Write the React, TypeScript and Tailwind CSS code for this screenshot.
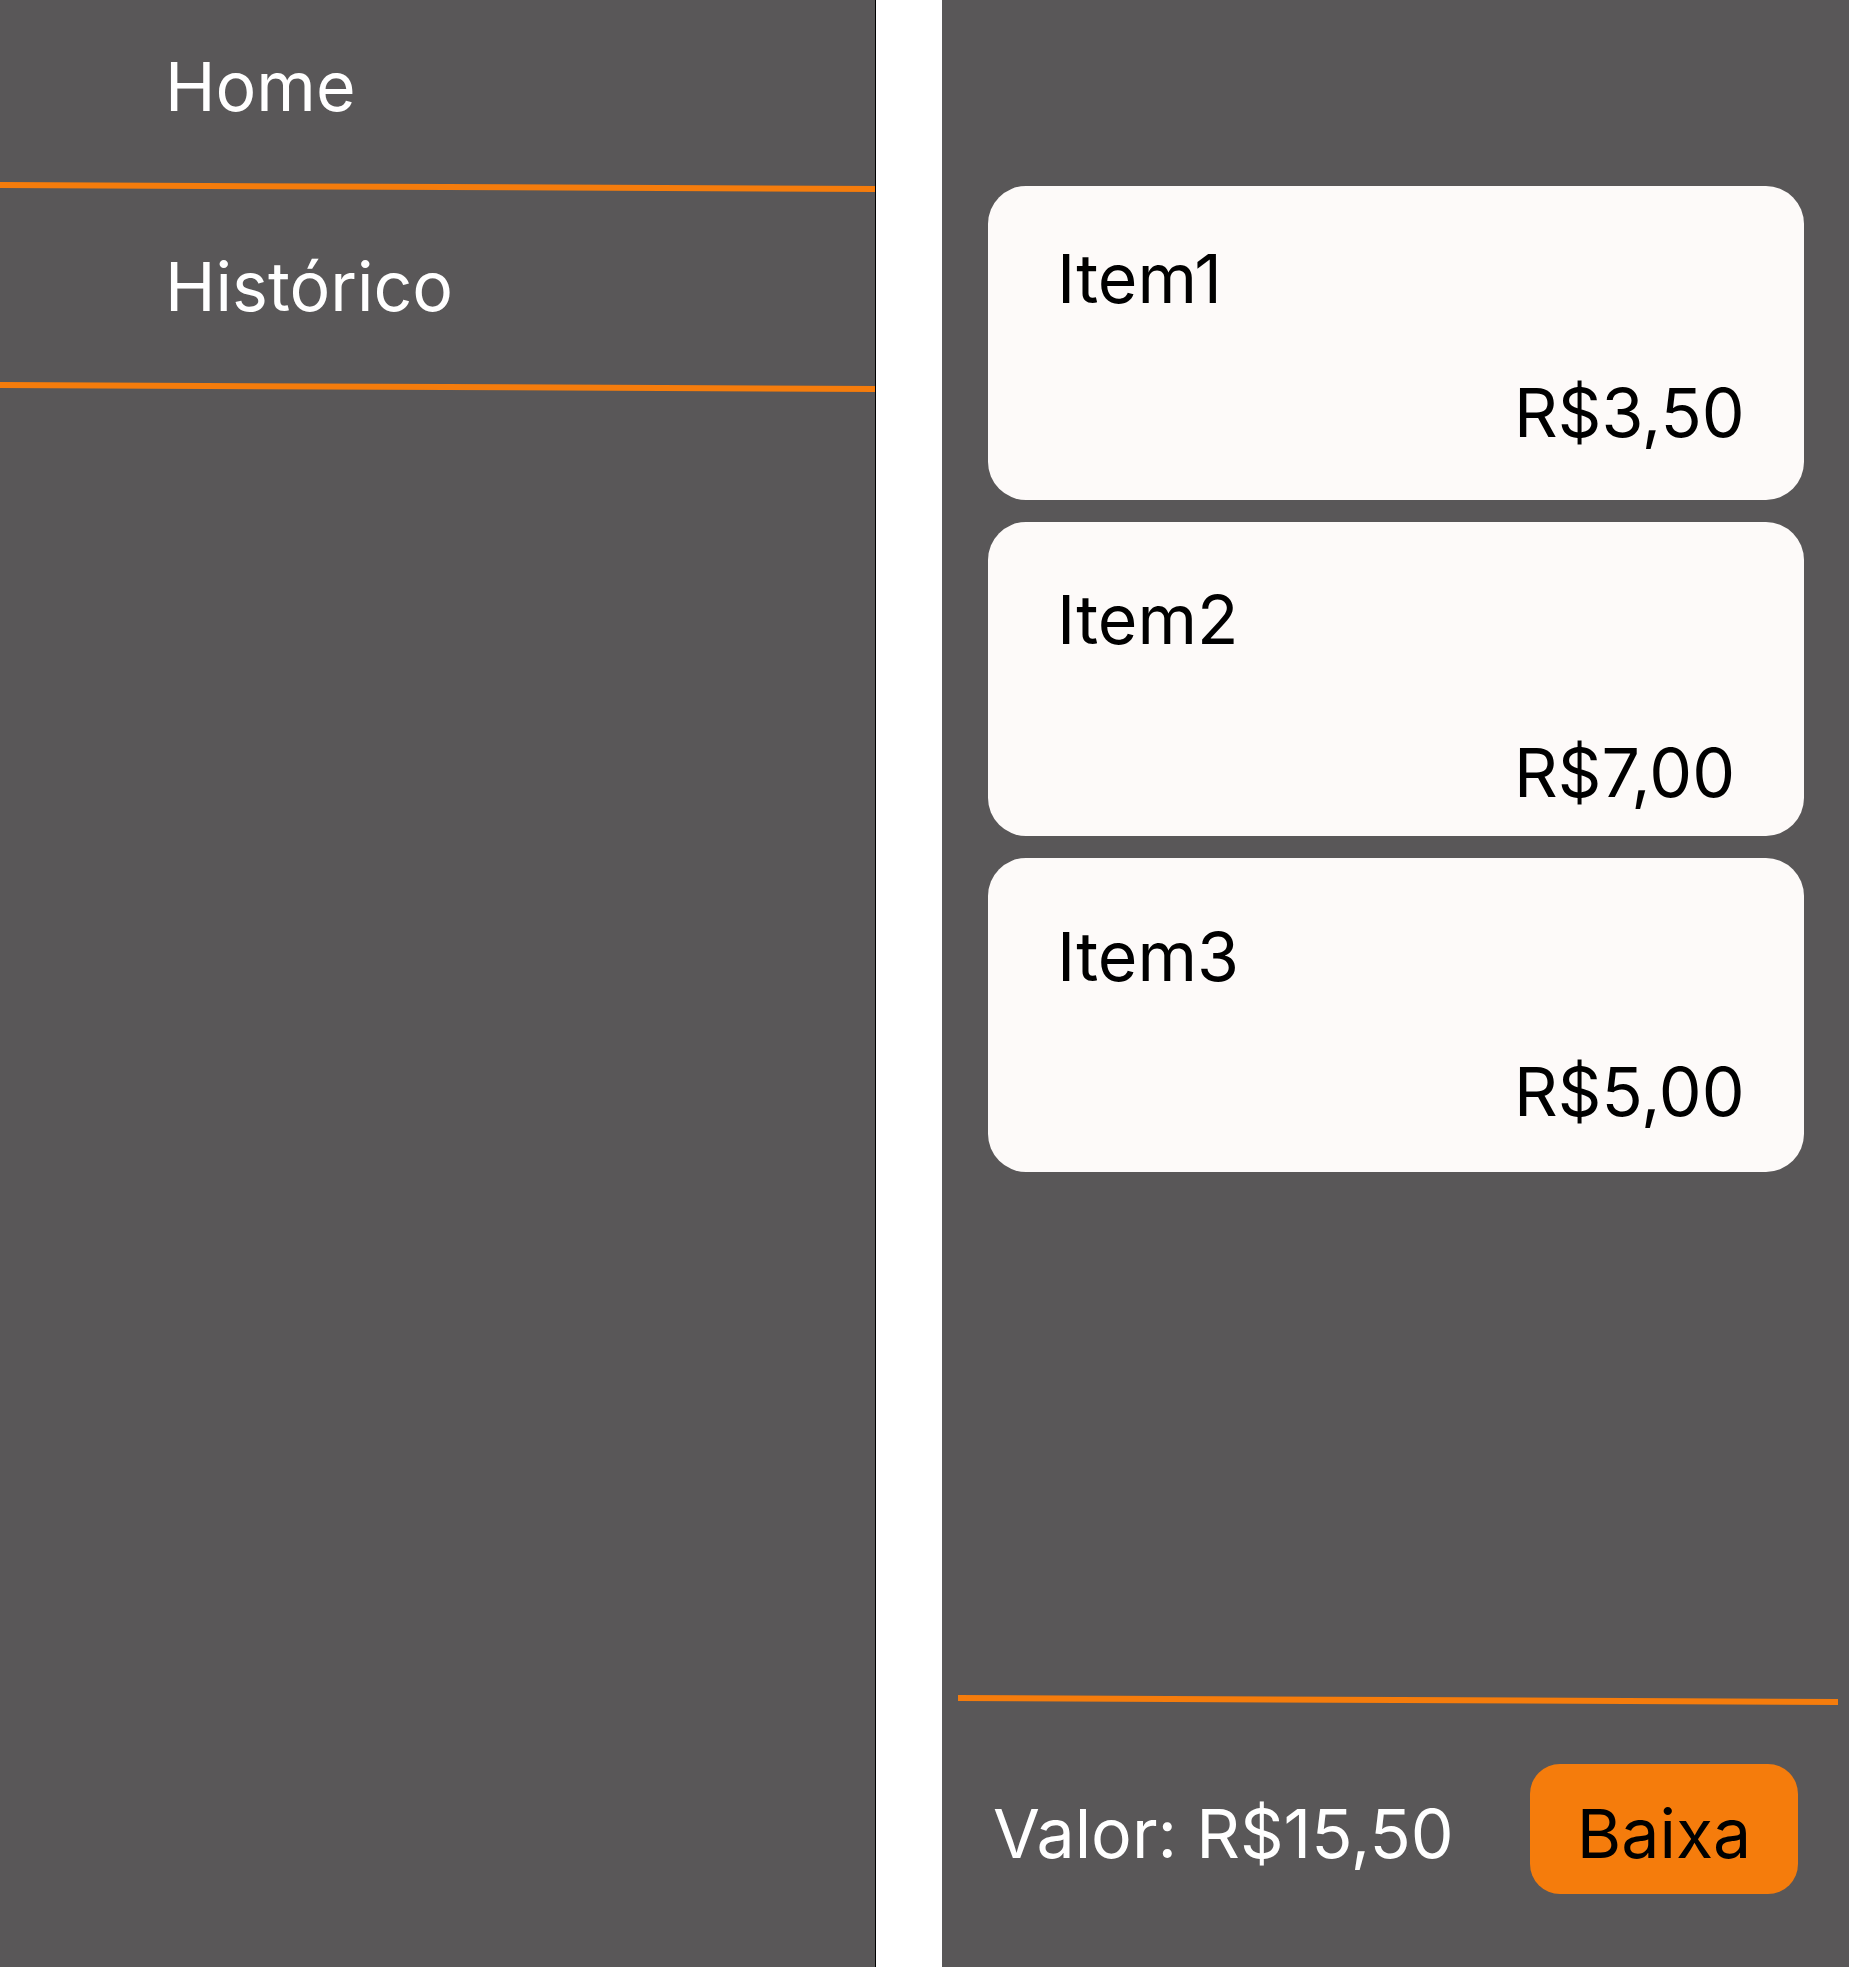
import React from "react";

const items = [
  { name: "Item1", price: "R$3,50", pt: "pt-[58px]", gap: "mt-[66px]" },
  { name: "Item2", price: "R$7,00", pt: "pt-[63px]", gap: "mt-[85px]" },
  { name: "Item3", price: "R$5,00", pt: "pt-[64px]", gap: "mt-[67px]" },
];

export default function App() {
  return (
    <div
      className="flex h-screen w-full bg-white overflow-hidden"
      style={{ fontFamily: "Inter, 'Noto Sans', sans-serif" }}
    >
      {/* Left nav panel */}
      <aside className="flex h-full w-[876px] shrink-0 flex-col border-r border-black bg-[#595758]">
        <div className="pl-[165px] pt-[52px] text-[68px] leading-[68px] text-white">Home</div>
        <div className="mt-[64px] h-[6px] w-full rotate-[0.26deg] bg-[#f57c0c]" />
        <div className="mt-[62px] pl-[165px] text-[68px] leading-[68px] text-white">Histórico</div>
        <div className="mt-[64px] h-[6px] w-full rotate-[0.26deg] bg-[#f57c0c]" />
      </aside>

      {/* Right content panel */}
      <main className="ml-[66px] flex h-full flex-1 flex-col bg-[#595758]">
        <div className="flex flex-col gap-[22px] pl-[46px] pr-[45px] pt-[186px]">
          {items.map((it) => (
            <div
              key={it.name}
              className={`flex h-[314px] flex-col rounded-[38px] bg-[#fdfaf9] ${it.pt}`}
            >
              <div className="pl-[69px] text-[68px] leading-[68px] text-black">{it.name}</div>
              <div className={`pl-[526px] text-[68px] leading-[68px] text-black ${it.gap}`}>
                {it.price}
              </div>
            </div>
          ))}
        </div>

        <div className="flex-1" />

        <div className="ml-[16px] mr-[11px] h-[6px] rotate-[0.26deg] bg-[#f57c0c]" />

        <div className="mb-[73px] mt-[61px] flex items-center pl-[51px]">
          <span className="pt-[8px] text-[68px] leading-[68px] text-white">Valor: R$15,50</span>
          <button className="ml-auto mr-[51px] flex h-[130px] w-[268px] items-center justify-center rounded-[30px] bg-[#f57c0c] pt-[8px] text-[68px] leading-[68px] text-black">
            Baixa
          </button>
        </div>
      </main>
    </div>
  );
}
